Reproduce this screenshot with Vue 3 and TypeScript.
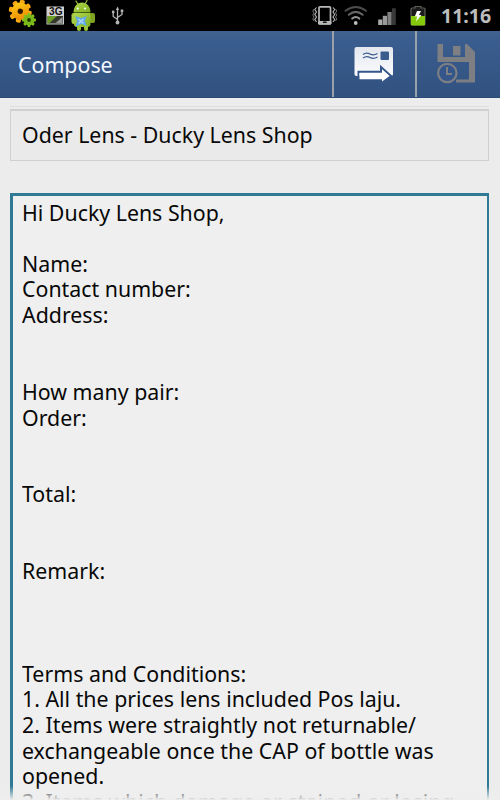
<script setup lang="ts">
const title: string = 'Compose'
const subject: string = 'Oder Lens - Ducky Lens Shop'
const message: string = [
  'Hi Ducky Lens Shop,',
  '',
  'Name:',
  'Contact number:',
  'Address:',
  '',
  '',
  'How many pair:',
  'Order:',
  '',
  '',
  'Total:',
  '',
  '',
  'Remark:',
  '',
  '',
  '',
  'Terms and Conditions:',
  '1. All the prices lens included Pos laju.',
  '2. Items were straightly not returnable/',
  'exchangeable once the CAP of bottle was',
  'opened.',
  '3. Items which damage or stained or losing',
].join('\n')
const teeth: number[] = [0, 45, 90, 135, 180, 225, 270, 315]
</script>

<template>
  <div class="screen">
    <header class="status">
      <svg class="status-left" width="140" height="31" viewBox="0 0 140 31">
        <defs>
          <linearGradient id="orange" x1="0" y1="0" x2="0.6" y2="1">
            <stop offset="0" stop-color="#ffd21c" />
            <stop offset="1" stop-color="#f08a00" />
          </linearGradient>
          <linearGradient id="droid" x1="0" y1="0" x2="1" y2="1">
            <stop offset="0" stop-color="#b4d84c" />
            <stop offset="1" stop-color="#7fae22" />
          </linearGradient>
        </defs>
        <g transform="translate(20.300 11.300) rotate(12)">
          <rect v-for="a in teeth" :key="a" x="-2.500" y="-11.500" width="5" height="6" rx="1.500" fill="#fba915" :transform="`rotate(${a})`" />
          <circle r="8.700" fill="url(#orange)" />
          <circle r="2.700" fill="#2b1700" />
        </g>
        <g transform="translate(29 20)">
          <rect v-for="a in teeth" :key="a" x="-1.500" y="-7" width="3" height="4" rx="1" fill="#84c41c" :transform="`rotate(${a})`" />
          <circle r="5.300" fill="#79b81a" />
          <circle r="1.900" fill="#1d3a00" />
        </g>
        <g>
          <rect x="46.500" y="6.500" width="17.500" height="18" fill="#cfcfcf" />
          <rect x="47.500" y="16" width="15.500" height="7.500" fill="#33372d" />
          <path d="M47.500 16H57L49 23.500H47.500Z" fill="#6e9d27" />
          <path d="M62.500 17V23H55.500Z" fill="#999" />
          <text x="49" y="15.200" class="three-g" textLength="13.500" lengthAdjust="spacingAndGlyphs">3G</text>
        </g>
        <g>
          <path d="M76 1L78.500 5M87 0.500L84.500 5" stroke="#9cc33c" stroke-width="1.200" stroke-linecap="round" />
          <rect x="89.500" y="13" width="5.500" height="10" rx="2" fill="#7da321" />
          <rect x="71.500" y="13" width="4.500" height="11" rx="2.200" fill="#a6cf45" />
          <path d="M73.500 12.500C73.500 -1 90.500 -1 90.500 12.500Z" fill="url(#droid)" />
          <path d="M74 13H90.500V24Q90.500 27 87.500 27H77Q74 27 74 24Z" fill="url(#droid)" />
          <rect x="77" y="25" width="4" height="6" rx="2" fill="#9bc437" />
          <rect x="84" y="25" width="4" height="6" rx="2" fill="#9bc437" />
          <circle cx="77.700" cy="8.500" r="1" fill="#fff" />
          <circle cx="85" cy="8.500" r="1" fill="#fff" />
          <path d="M75 16L81 18L87 16L85 21L87 26L81 24L75.500 27L77 21Z" fill="#63a8e6" />
          <path d="M78.500 19L83.500 23.500M83.500 19L78.500 23.500" stroke="#a9d4f7" stroke-width="1.500" />
        </g>
        <g stroke="#b4b4b4" fill="none" stroke-width="1.300">
          <path d="M117.500 9V22M117.500 19.500L113.200 16.500V12M117.500 17.500L122 14.500V11" />
          <path d="M115.800 10L117.500 6.500L119.200 10Z" fill="#b4b4b4" stroke="none" />
          <circle cx="117.500" cy="22.500" r="1.900" fill="#b4b4b4" stroke="none" />
          <circle cx="113.200" cy="12" r="1.400" fill="#b4b4b4" stroke="none" />
          <rect x="120.700" y="9.500" width="2.600" height="2.600" fill="#b4b4b4" stroke="none" />
        </g>
      </svg>
      <svg class="status-right" width="130" height="31" viewBox="310 0 130 31">
        <g fill="none" stroke="#b8b8b8">
          <rect x="319" y="6.800" width="11.500" height="17.200" rx="1" stroke-width="1.700" />
          <path d="M318.500 21.500H331V24H318.500Z" fill="#b8b8b8" />
          <path d="M316.500 7.500L314.800 9.500L316.500 12L314.800 14.500L316.500 17L314.800 19.500L316.500 22M333 7.500L334.700 9.500L333 12L334.700 14.500L333 17L334.700 19.500L333 22" stroke-width="1.100" />
          <path d="M314 9L312.800 11L314 13L312.800 15L314 17L312.800 19L314 21M335.500 9L336.700 11L335.500 13L336.700 15L335.500 17L336.700 19L335.500 21" stroke-width="0.800" stroke="#929292" />
        </g>
        <rect x="322.800" y="21.600" width="4" height="1.500" rx="0.700" fill="#111" />
        <g fill="none" stroke-linecap="round" stroke-width="2">
          <path d="M345.500 10.800Q355.700 3.200 366 10.800" stroke="#4c4c4c" />
          <path d="M348.800 14.800Q355.700 9 362.700 14.800" stroke="#656565" />
          <path d="M352.200 18.600Q355.700 15.500 359.300 18.600" stroke="#969696" />
        </g>
        <circle cx="355.700" cy="23" r="1.900" fill="#bcbcbc" />
        <rect x="378.200" y="19.500" width="4.200" height="5.500" fill="#aaa" />
        <rect x="382.800" y="15.800" width="4.200" height="9.200" fill="#999" />
        <rect x="387.400" y="12" width="4.200" height="13" fill="#7f7f7f" />
        <rect x="392" y="8.300" width="3.800" height="16.700" fill="#393939" />
        <path d="M415 8V6.500H421V8H424Q425 8 425 9V24Q425 25 424 25H412Q411 25 411 24V9Q411 8 412 8Z" fill="#1b1b1b" stroke="#5c6158" stroke-width="1.200" />
        <path d="M411 16H425V24Q425 25.500 424 25.500H412Q411 25.500 411 24Z" fill="#86cb0b" />
        <path d="M417 11L421 11L419 15H421.500L416 21.500L417.200 16.500H414.800Z" fill="#fff" />
      </svg>
      <span class="clock">11:16</span>
    </header>

    <nav class="bar">
      <h1 class="title"><span class="droid-text">{{ title }}</span></h1>
      <button class="action send" aria-label="Send">
        <svg width="40" height="38" viewBox="0 0 40 38">
          <defs>
            <linearGradient id="paper" x1="0" y1="0" x2="0" y2="1">
              <stop offset="0" stop-color="#e3e7ee" />
              <stop offset="1" stop-color="#fbfcfe" />
            </linearGradient>
          </defs>
          <rect x="0.500" y="2" width="38.500" height="29" rx="2" fill="url(#paper)" />
          <rect x="26.500" y="6.500" width="8.500" height="8.500" rx="1" fill="#3a5c8e" />
          <path d="M9 9.500Q12.500 7 16 9T23.500 8.500M9 13Q12.500 10.500 16 12.500T23.500 12" fill="none" stroke="#3a5c8e" stroke-width="1.300" />
          <path d="M4.500 33V26.800H27V22L37 31L27 39" fill="none" stroke="#35578b" stroke-width="2" />
          <path d="M5.500 28H28V24.500L35.500 31L28 36.500V34.200H5.500Z" fill="#fff" />
        </svg>
      </button>
      <button class="action save" aria-label="Save draft">
        <svg width="40" height="42" viewBox="0 0 40 42">
          <path d="M1.500 1H7V14H29V1H31L39 9V39.500H20V36.500H33V19H1.500Z" fill="#7d7f83" />
          <rect x="17" y="3" width="7.500" height="9.500" fill="#7d7f83" />
          <circle cx="11.300" cy="30" r="11" fill="#34568a" />
          <circle cx="11.300" cy="30" r="9.200" fill="none" stroke="#7d7f83" stroke-width="2.200" />
          <path d="M11 24V31H16" fill="none" stroke="#7d7f83" stroke-width="2" />
        </svg>
      </button>
    </nav>

    <main class="form">
      <div class="edge"></div>
      <div class="subject"><span class="droid-text">{{ subject }}</span></div>
      <div class="body">
        <div class="message droid-text">{{ message }}</div>
      </div>
      <div class="fade"></div>
    </main>
  </div>
</template>

<style>
body {
  margin: 0;
  overflow: hidden;
}
</style>

<style scoped>
.screen {
  position: relative;
  display: flex;
  flex-direction: column;
  width: 500px;
  height: 800px;
  overflow: hidden;
  background: #ececec;
  font-family: "Noto Sans", "Open Sans", sans-serif;
}
.status {
  display: flex;
  flex: none;
  height: 31px;
  background: #000;
}
.status-left {
  flex: none;
}
.status-right {
  flex: none;
  margin-left: 170px;
}
.three-g {
  font: bold 10px "Liberation Sans", sans-serif;
  fill: #111;
}
.clock {
  padding-left: 1px;
  color: #bdbdbd;
  font-size: 19.5px;
  font-weight: 700;
  line-height: 31px;
}
.bar {
  display: flex;
  flex: none;
  box-sizing: border-box;
  height: 67px;
  border-bottom: 1px solid #2a4a7a;
  background: linear-gradient(#41638f, #3a5d8f 15%, #31527f);
}
.title {
  flex: 1;
  margin: 0;
  padding-left: 17.6px;
  color: #f4f8ff;
  font-size: 22px;
  font-weight: 400;
  line-height: 67px;
}
.action {
  display: flex;
  align-items: center;
  justify-content: center;
  box-sizing: border-box;
  padding: 0;
  border: 0;
  border-left: 2px solid #9ba1aa;
  background: none;
}
.send {
  width: 83px;
  padding-right: 1px;
}
.save {
  width: 85px;
  padding: 0 5px 0 0;
}
.form {
  display: flex;
  flex: 1;
  flex-direction: column;
  min-height: 0;
  padding: 0 11px 0 10px;
  color: #080808;
  font-size: 22px;
}
.edge {
  box-sizing: border-box;
  flex: none;
  height: 9px;
  border-bottom: 1px solid #dedede;
}
.subject {
  box-sizing: border-box;
  flex: none;
  height: 52px;
  margin-top: 2px;
  padding-left: 10.6px;
  border: 1px solid #d0d0d0;
  border-top: 2px solid #cfcfcf;
  background: #eaeaea;
  line-height: 47px;
}
.body {
  flex: 1;
  min-height: 0;
  margin-top: 32px;
  padding: 3.6px 0 0 8.6px;
  overflow: hidden;
  border: 3px solid #317a95;
  border-right-width: 2px;
  border-bottom: 0;
  background: #efefef;
}
.message {
  line-height: 25.62px;
  white-space: pre;
}
.droid-text {
  display: inline-block;
  transform: scaleX(0.97);
  transform-origin: left;
}
.fade {
  position: absolute;
  right: 0;
  bottom: 0;
  left: 0;
  height: 14px;
  background: linear-gradient(rgba(238, 238, 238, 0), #eee);
}
</style>
